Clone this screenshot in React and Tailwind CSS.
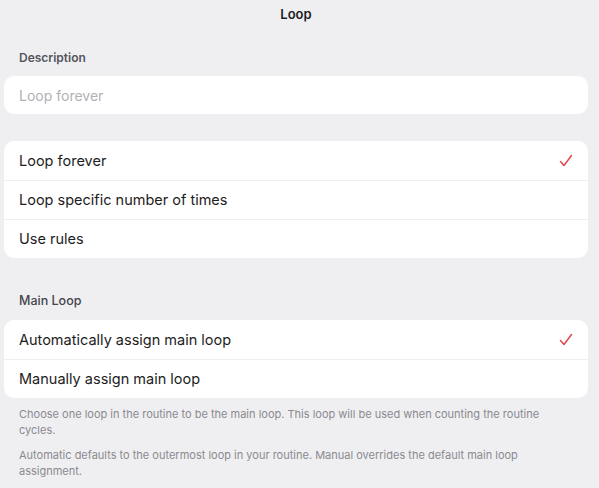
const loopModes = [
  { label: 'Loop forever', checked: true },
  { label: 'Loop specific number of times' },
  { label: 'Use rules' },
];

const mainLoopModes = [
  { label: 'Automatically assign main loop', checked: true },
  { label: 'Manually assign main loop' },
];

function Check() {
  return (
    <svg width="14" height="14" viewBox="0 0 14 14" fill="none" className="text-[#e5484d]">
      <path d="M1.5 7.5 L5 11.5 L12.5 1.5" stroke="currentColor" strokeWidth="1.5" strokeLinecap="round" strokeLinejoin="round" />
    </svg>
  );
}

function OptionList({ items }) {
  return (
    <div className="overflow-hidden rounded-[10px] bg-white">
      {items.map((item, i) => (
        <div
          key={item.label}
          className={`flex h-[39px] items-center justify-between pl-[15px] pr-[15px] ${i > 0 ? 'border-t border-[#efeff2]' : ''}`}
        >
          <span className="text-[14.5px] text-[#1d1d22]">{item.label}</span>
          {item.checked && <Check />}
        </div>
      ))}
    </div>
  );
}

export default function App() {
  return (
    <div className="min-h-screen bg-[#efeff2] pl-1 pr-[11px] font-['Inter',sans-serif]">
      <h1 className="pt-[5px] text-center text-[13px] font-semibold leading-[18px] text-[#1d1d22]">Loop</h1>

      <p className="mt-[27px] pl-[15px] text-[12px] font-semibold leading-[16px] text-[#55555c]">Description</p>
      <div className="mt-[10px] flex h-[38px] items-center rounded-[10px] bg-white pl-[15px]">
        <span className="text-[14px] text-[#b0b0b6]">Loop forever</span>
      </div>

      <div className="mt-[27px]">
        <OptionList items={loopModes} />
      </div>

      <p className="mt-[35px] pl-[15px] text-[12.5px] font-medium leading-[16px] text-[#45454c]">Main Loop</p>
      <div className="mt-[11px]">
        <OptionList items={mainLoopModes} />
      </div>

      <div className="mt-[8px] space-y-[9px] pl-[15px] pr-[20px] text-[11px] leading-[16px] text-[#8a8a90]">
        <p>Choose one loop in the routine to be the main loop. This loop will be used when counting the routine cycles.</p>
        <p>Automatic defaults to the outermost loop in your routine. Manual overrides the default main loop assignment.</p>
      </div>
    </div>
  );
}
